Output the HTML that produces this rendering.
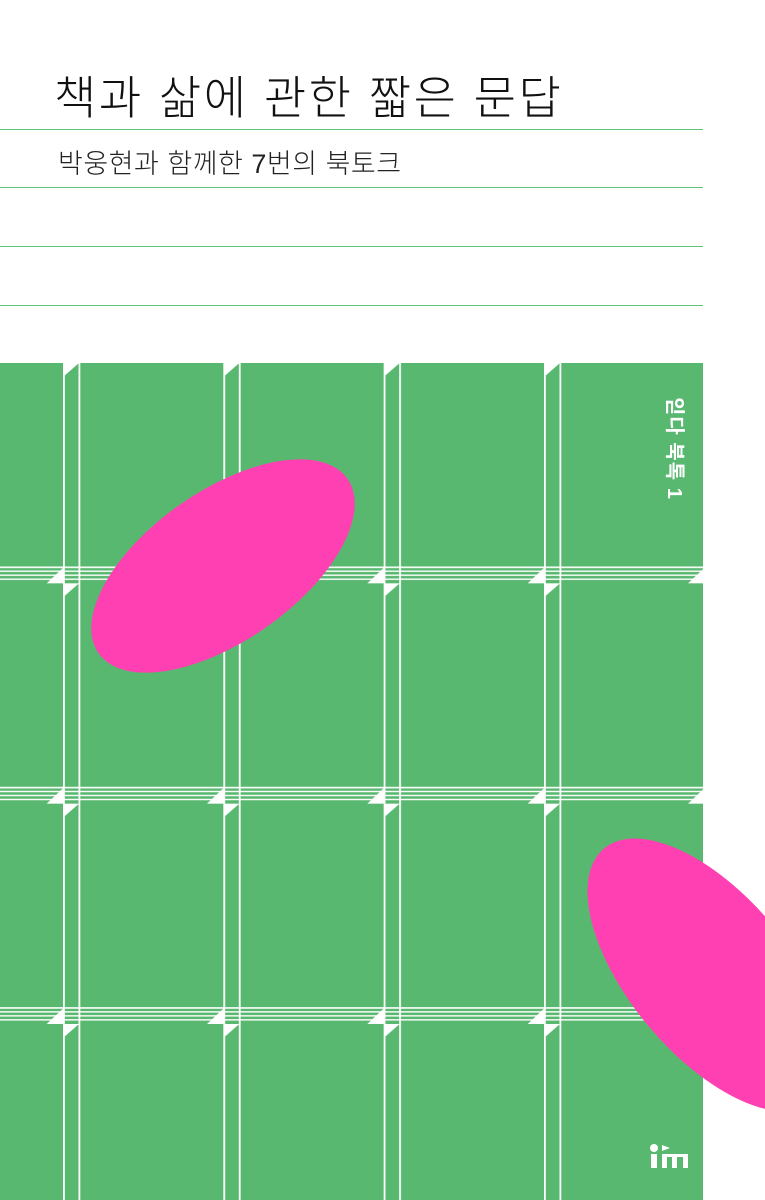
<!DOCTYPE html>
<html><head><meta charset="utf-8"><style>
html,body{margin:0;padding:0;background:#fff;}
body{width:765px;height:1200px;position:relative;overflow:hidden;font-family:"Liberation Sans","Noto Sans CJK KR",sans-serif;}
.t{position:absolute;left:54px;top:62px;font-size:46px;color:#111;letter-spacing:2.5px;white-space:nowrap;font-weight:300;}
.s{position:absolute;left:58px;top:142px;font-size:27px;color:#222;white-space:nowrap;letter-spacing:0.5px;font-weight:300;}
.l{position:absolute;left:0;width:703px;height:1px;background:#5cc47a;}
.v{position:absolute;left:684px;top:397px;color:#fff;font-weight:bold;font-size:20px;white-space:nowrap;letter-spacing:1px;transform-origin:0 0;transform:rotate(90deg);line-height:1;}
</style></head><body>
<div class="t">책과 삶에 관한 짧은 문답</div>
<div class="s">박웅현과 함께한 7번의 북토크</div>
<div class="l" style="top:129px"></div>
<div class="l" style="top:187px"></div>
<div class="l" style="top:246px"></div>
<div class="l" style="top:305px"></div>
<svg width="765" height="1200" style="position:absolute;left:0;top:0">
<defs>
<pattern id="p" patternUnits="userSpaceOnUse" x="63" y="363" width="160.33" height="220.33">
<rect width="161" height="221" fill="#59b86f"/>
<rect x="0" y="0" width="1.8" height="221" fill="#fff"/>
<rect x="15.5" y="0" width="1.8" height="221" fill="#fff"/>
<rect x="-1" y="203.5" width="162" height="1.6" fill="#fff"/>
<rect x="-1" y="207.5" width="162" height="1.4" fill="#fff"/>
<rect x="-1" y="211.5" width="162" height="1.4" fill="#fff"/>
<rect x="-1" y="215.5" width="162" height="1.4" fill="#fff"/>
<polygon points="0,0 16,0 0,14" fill="#fff"/>
<polygon points="144,220.33 160.33,205 160.33,220.33" fill="#fff"/>
</pattern>
</defs>
<rect x="0" y="363" width="703" height="837" fill="url(#p)"/>
<ellipse cx="223" cy="566" rx="152" ry="75" transform="rotate(-35 223 566)" fill="#ff40b2"/>
<ellipse cx="710" cy="975" rx="165" ry="80" transform="rotate(50 710 975)" fill="#ff40b2"/>
<circle cx="654" cy="1148" r="4" fill="#fff"/>
<polygon points="662,1145 670,1148 662,1151" fill="#fff"/>
<rect x="651" y="1154" width="6" height="14" fill="#fff"/>
<rect x="662" y="1154" width="26" height="3" fill="#fff"/>
<rect x="662" y="1154" width="5" height="14" fill="#fff"/>
<rect x="672" y="1154" width="5" height="14" fill="#fff"/>
<rect x="683" y="1154" width="5" height="14" fill="#fff"/>
</svg>
<div class="v">읻다 북톡 1</div>
</body></html>
